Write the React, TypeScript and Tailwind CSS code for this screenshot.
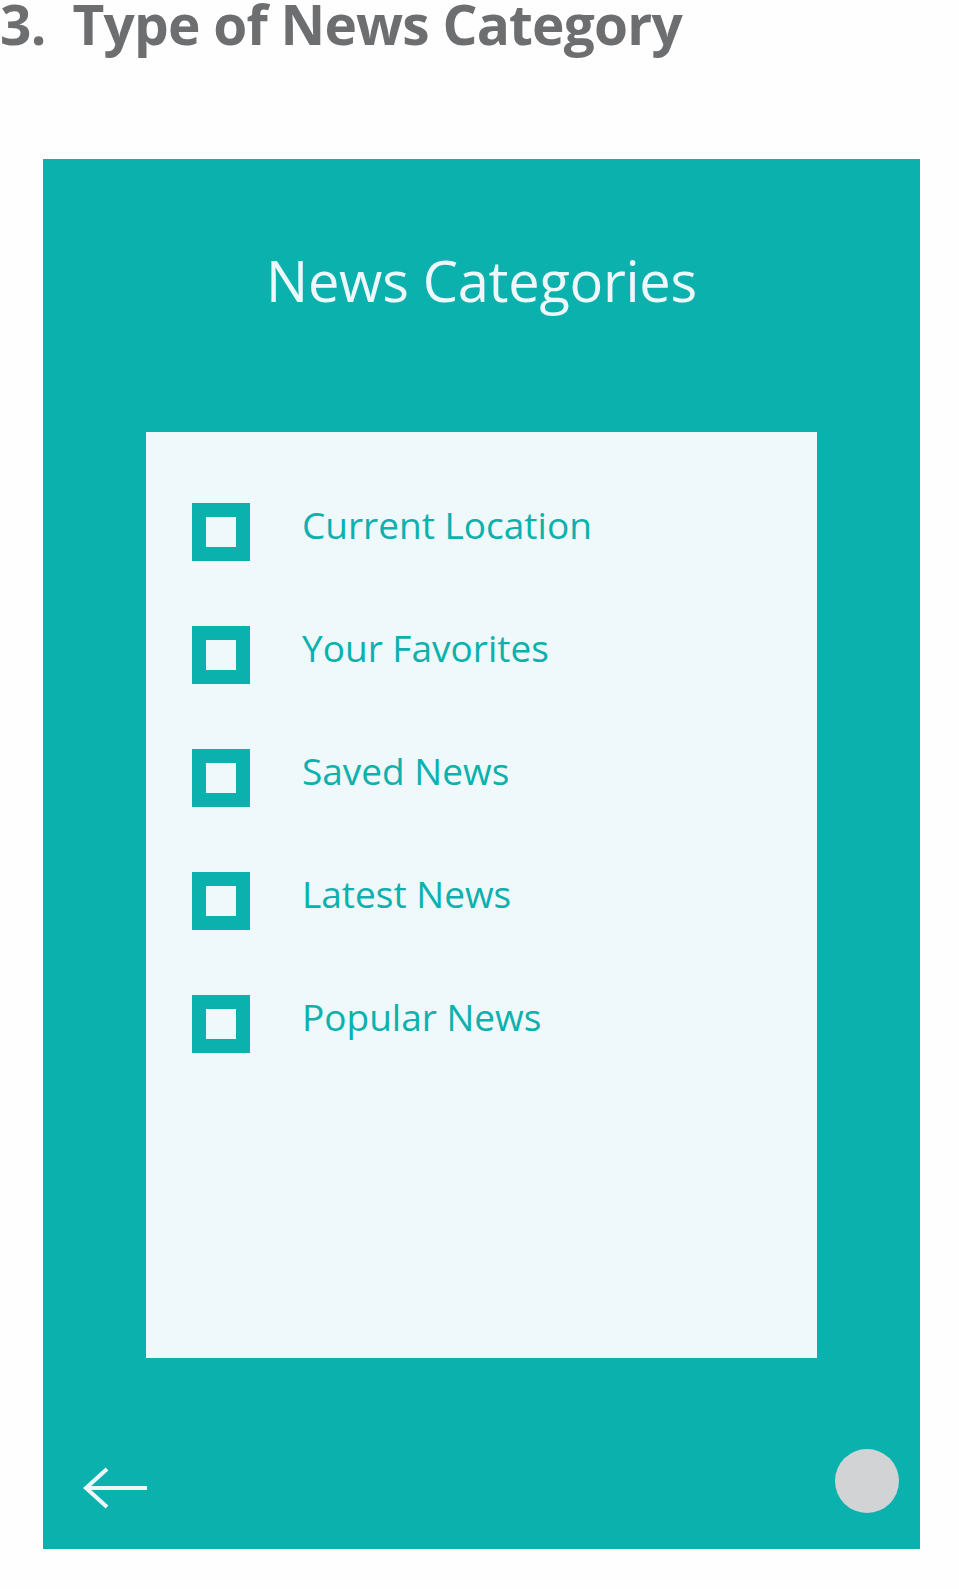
const categories = [
  "Current Location",
  "Your Favorites",
  "Saved News",
  "Latest News",
  "Popular News",
];

function CheckBox() {
  return (
    <div className="h-[58px] w-[58px] shrink-0 border-[14px] border-[#0bb1ad] bg-[#eff8fb]" />
  );
}

function BackArrow() {
  return (
    <svg width="64" height="42" viewBox="0 0 64 42" fill="none">
      <path
        d="M24 2 L3 21 L24 40 M3 21 H64"
        stroke="#eef8fb"
        strokeWidth="4"
      />
    </svg>
  );
}

export default function App() {
  return (
    <div
      className="min-h-[1589px] w-[959px] bg-[#fefefe]"
      style={{ fontFamily: '"Open Sans", "Noto Sans", sans-serif' }}
    >
      <h1 className="h-[48px] whitespace-nowrap text-[55px] font-bold leading-[48px] tracking-[-0.8px] text-[#6d6e70]">
        3.&nbsp; Type of News Category
      </h1>

      <div className="ml-[43px] mt-[111px] flex h-[1390px] w-[877px] flex-col bg-[#0bb1ad]">
        <h2 className="mt-[93px] text-center text-[56px] leading-[56px] tracking-[-0.3px] text-[#eef8fb]">
          News Categories
        </h2>

        <div className="mx-auto mt-[124px] flex h-[926px] w-[671px] flex-col gap-[65px] bg-[#eff8fb] pl-[46px] pt-[71px]">
          {categories.map((c) => (
            <div key={c} className="flex items-start gap-[52px]">
              <CheckBox />
              <span className="text-[37px] leading-[44px] text-[#0bb1ad]">
                {c}
              </span>
            </div>
          ))}
        </div>

        <div className="flex items-start justify-between pl-[40px] pr-[21px]">
          <div className="mt-[109px]">
            <BackArrow />
          </div>
          <div className="mt-[91px] h-[64px] w-[64px] rounded-full bg-[#d1d3d4]" />
        </div>
      </div>
    </div>
  );
}
